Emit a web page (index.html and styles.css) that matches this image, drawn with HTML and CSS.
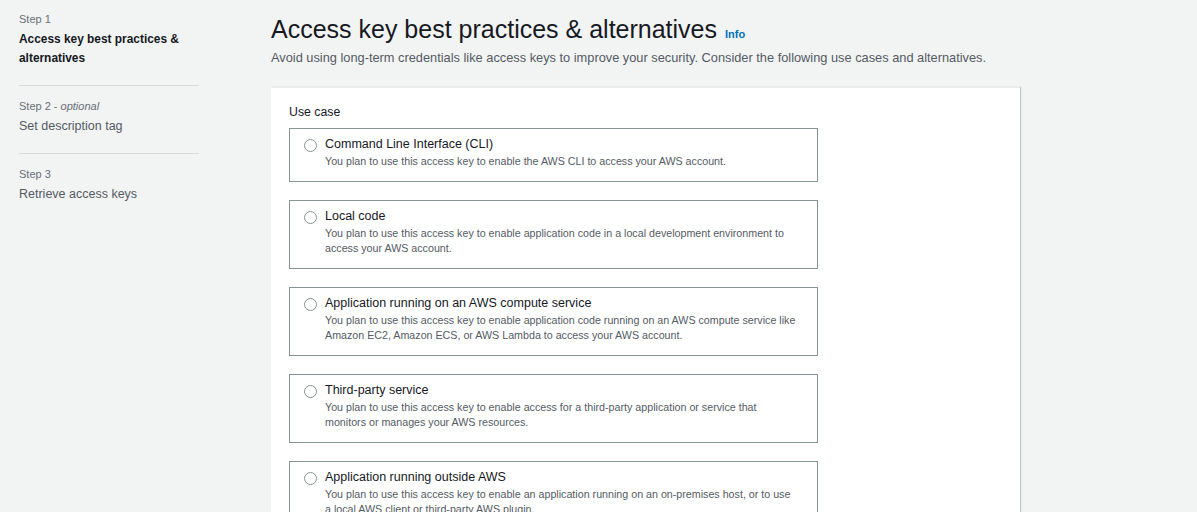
FILE: index.html
```html
<!DOCTYPE html>
<html>
<head>
<meta charset="utf-8">
<link rel="stylesheet" href="styles.css">
</head>
<body>
<div class="page">
  <nav class="steps">
    <div class="step">
      <div class="step-num">Step 1</div>
      <div class="step-title active">Access key best practices &amp; alternatives</div>
    </div>
    <div class="step">
      <div class="step-num">Step 2 - <i>optional</i></div>
      <div class="step-title">Set description tag</div>
    </div>
    <div class="step">
      <div class="step-num">Step 3</div>
      <div class="step-title">Retrieve access keys</div>
    </div>
  </nav>
  <main class="main">
    <h1 class="heading"><span>Access key best practices &amp; alternatives</span><a class="info">Info</a></h1>
    <p class="subtitle">Avoid using long-term credentials like access keys to improve your security. Consider the following use cases and alternatives.</p>
    <section class="card">
      <div class="label">Use case</div>
      <div class="options">
        <label class="option">
          <span class="radio"></span>
          <span class="opt-text">
            <span class="opt-title">Command Line Interface (CLI)</span>
            <span class="opt-desc">You plan to use this access key to enable the AWS CLI to access your AWS account.</span>
          </span>
        </label>
        <label class="option">
          <span class="radio"></span>
          <span class="opt-text">
            <span class="opt-title">Local code</span>
            <span class="opt-desc">You plan to use this access key to enable application code in a local development environment to access your AWS account.</span>
          </span>
        </label>
        <label class="option">
          <span class="radio"></span>
          <span class="opt-text">
            <span class="opt-title">Application running on an AWS compute service</span>
            <span class="opt-desc">You plan to use this access key to enable application code running on an AWS compute service like Amazon EC2, Amazon ECS, or AWS Lambda to access your AWS account.</span>
          </span>
        </label>
        <label class="option">
          <span class="radio"></span>
          <span class="opt-text">
            <span class="opt-title">Third-party service</span>
            <span class="opt-desc">You plan to use this access key to enable access for a third-party application or service that monitors or manages your AWS resources.</span>
          </span>
        </label>
        <label class="option">
          <span class="radio"></span>
          <span class="opt-text">
            <span class="opt-title">Application running outside AWS</span>
            <span class="opt-desc">You plan to use this access key to enable an application running on an on-premises host, or to use a local AWS client or third-party AWS plugin.</span>
          </span>
        </label>
      </div>
    </section>
  </main>
</div>
</body>
</html>
```

FILE: styles.css
```css
html, body {
  margin: 0;
  padding: 0;
  background: #f2f3f3;
  font-family: "Liberation Sans", Arial, sans-serif;
  color: #16191f;
  overflow: hidden;
}

.page {
  display: flex;
  padding: 10px 0 0 19px;
  height: 502px;
}

.steps {
  width: 180px;
  flex: none;
}

.step {
  border-bottom: 1px solid #d5dbdb;
  padding: 0 0 17px;
  margin-bottom: 11px;
}

.step:last-child {
  border-bottom: none;
}

.step-num {
  font-size: 11px;
  line-height: 18px;
  color: #687078;
}

.step-title {
  font-size: 12.5px;
  line-height: 19px;
  color: #545b64;
  margin-top: 2px;
}

.step-title.active {
  font-size: 11.9px;
  font-weight: 700;
  color: #16191f;
}

.main {
  margin-left: 72px;
  width: 749px;
  flex: none;
}

.heading {
  display: flex;
  align-items: baseline;
  gap: 8px;
  margin: 2px 0 0;
  font-size: 25px;
  font-weight: 400;
  line-height: 34px;
  color: #16191f;
}

.info {
  font-size: 11px;
  line-height: 14px;
  font-weight: 700;
  color: #0073bb;
}

.subtitle {
  margin: 2px 0 0;
  font-size: 12.8px;
  line-height: 20px;
  color: #545b64;
}

.card {
  margin-top: 19px;
  background: #fff;
  border-top: 1px solid #eaeded;
  box-shadow: 1px 0 1px rgba(0, 28, 36, 0.2);
  padding: 15px 202px 20px 18px;
  height: 500px;
}

.label {
  font-size: 12.3px;
  line-height: 19px;
  color: #16191f;
}

.options {
  margin-top: 6px;
  display: flex;
  flex-direction: column;
  gap: 18px;
}

.option {
  display: flex;
  align-items: flex-start;
  border: 1px solid #879596;
  padding: 6px 20px 12px 14px;
}

.radio {
  flex: none;
  width: 11px;
  height: 11px;
  border: 1px solid #879596;
  border-radius: 50%;
  margin-top: 4px;
  margin-right: 8px;
}

.opt-text {
  display: flex;
  flex-direction: column;
}

.opt-title {
  font-size: 12.5px;
  line-height: 19px;
  color: #16191f;
}

.opt-desc {
  font-size: 10.7px;
  line-height: 15px;
  color: #545b64;
}
```
